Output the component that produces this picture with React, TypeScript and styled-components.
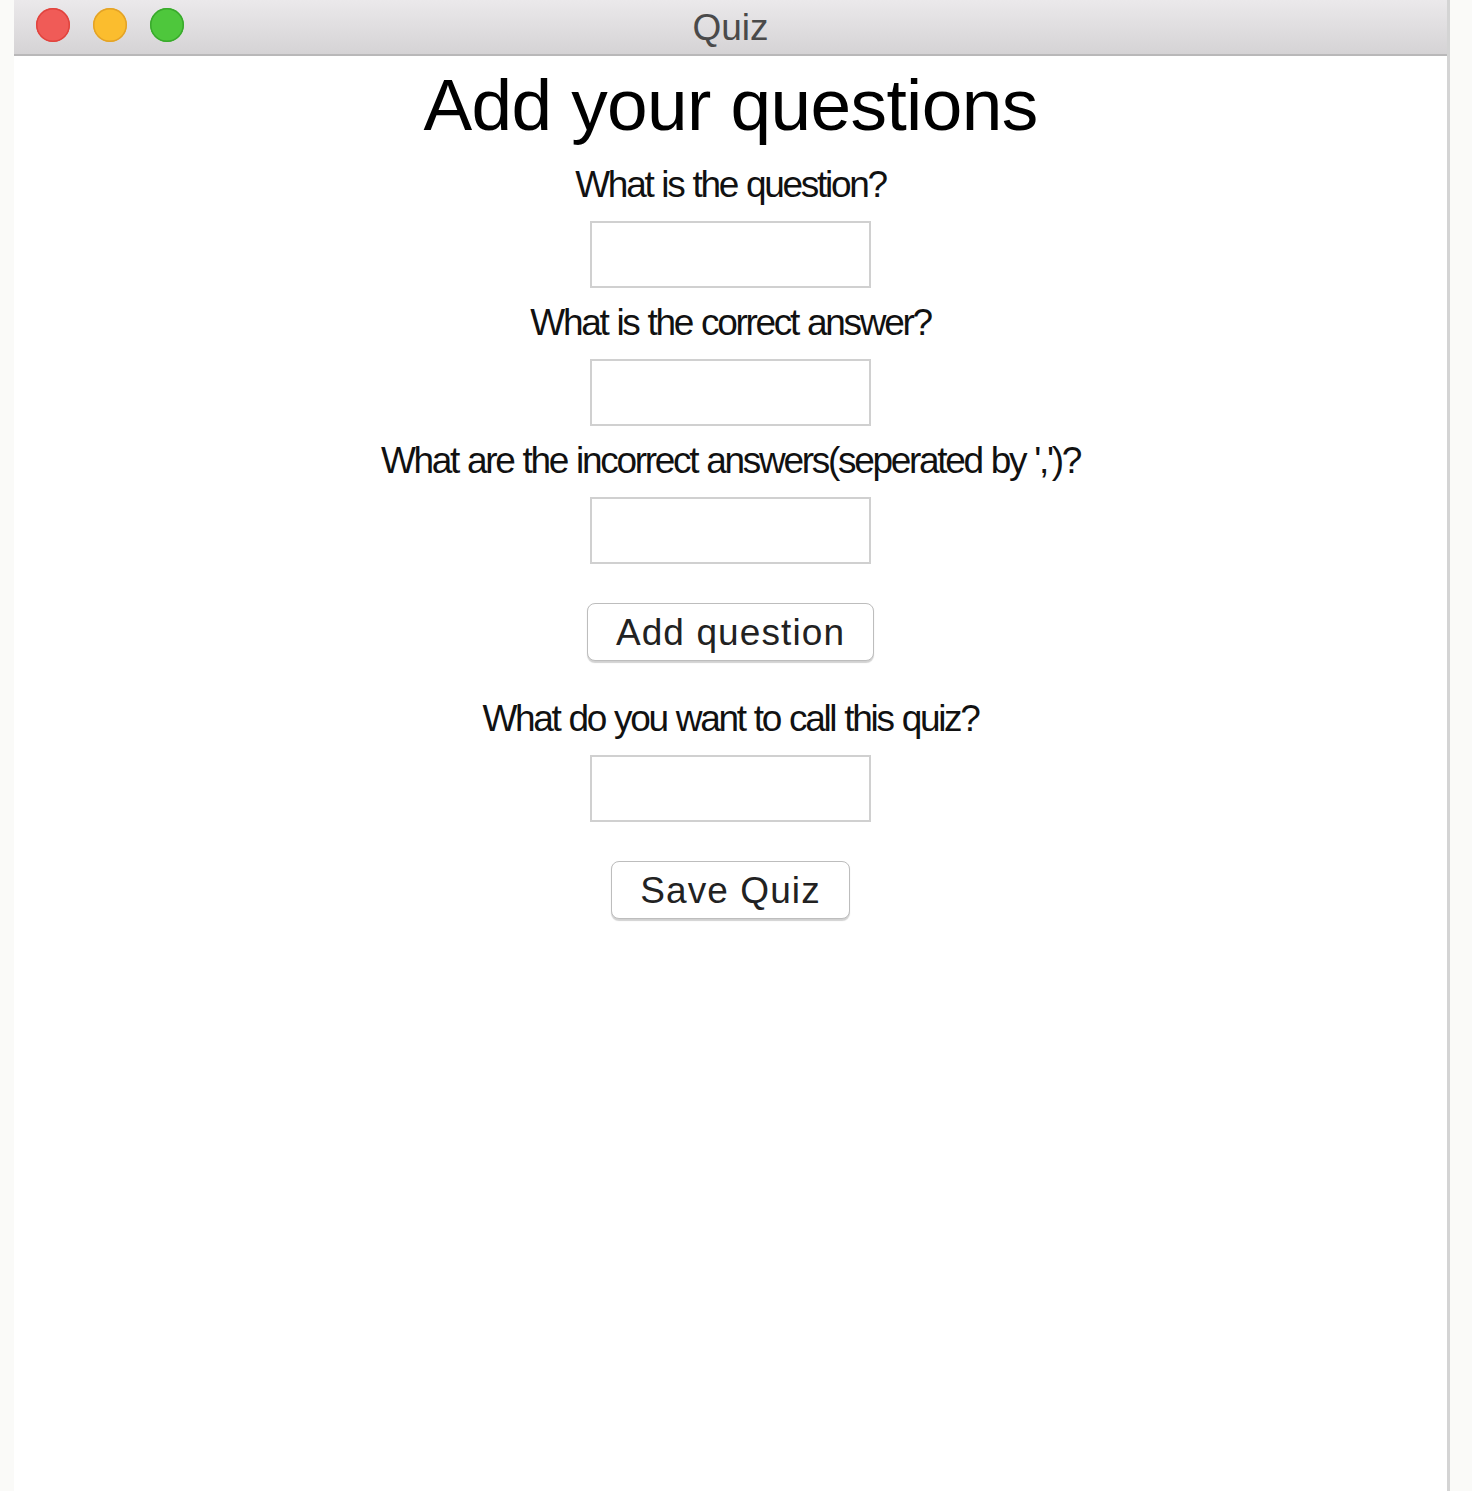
import React from "react";
import styled, { createGlobalStyle } from "styled-components";

const GlobalStyle = createGlobalStyle`
  html, body {
    margin: 0;
    padding: 0;
    background: #fafaf8;
  }
`;

const Page = styled.div`
  display: flex;
  height: 1491px;
  padding-left: 14px;
  box-sizing: border-box;
`;

const Window = styled.div`
  display: flex;
  flex-direction: column;
  width: 1433px;
  background: #ffffff;
  border-right: 3px solid #d4d4d4;
`;

const TitleBar = styled.div`
  position: relative;
  display: flex;
  align-items: center;
  justify-content: center;
  height: 54px;
  background: linear-gradient(#ebe9eb, #d5d3d5);
  border-bottom: 2px solid #b9b8b9;
  flex-shrink: 0;
`;

const Lights = styled.div`
  position: absolute;
  left: 22px;
  top: 8px;
  display: flex;
  gap: 23px;
`;

const Light = styled.span<{ $fill: string; $ring: string }>`
  width: 34px;
  height: 34px;
  border-radius: 50%;
  background: ${(p) => p.$fill};
  box-shadow: inset 0 0 0 1.5px ${(p) => p.$ring};
`;

const Title = styled.span`
  font-family: "Liberation Sans", Arial, sans-serif;
  font-size: 37px;
  color: #4a4a4a;
  line-height: 1;
  margin-top: 1px;
`;

const Content = styled.div`
  display: flex;
  flex-direction: column;
  align-items: center;
  padding-top: 13px;
  font-family: "Liberation Sans", Arial, sans-serif;
  color: #111;
`;

const Heading = styled.h1`
  margin: 0 0 24px;
  font-size: 73px;
  font-weight: 400;
  line-height: 72px;
  letter-spacing: -0.6px;
  color: #000;
`;

const Label = styled.label`
  display: block;
  font-size: 37px;
  line-height: 40px;
  letter-spacing: -2.3px;
  word-spacing: 1px;
  margin-bottom: 16px;
`;

const Input = styled.input`
  display: block;
  box-sizing: border-box;
  width: 281px;
  height: 67px;
  margin: 0 0 15px;
  border: 2px solid #d0d0d0;
  background: #fff;
  outline: none;
`;

const Button = styled.button`
  box-sizing: border-box;
  height: 58px;
  margin: 24px 0 38px;
  padding: 0 28px;
  border: 1.5px solid #bdbdbd;
  border-radius: 8px;
  background: #fff;
  box-shadow: 0 1.5px 1px rgba(0, 0, 0, 0.18);
  font-family: "Liberation Sans", Arial, sans-serif;
  font-size: 37px;
  letter-spacing: 1.1px;
  color: #222;
  line-height: 1;
`;

const Field = ({ label }: { label: string }) => (
  <>
    <Label>{label}</Label>
    <Input type="text" />
  </>
);

export default function App() {
  return (
    <>
      <GlobalStyle />
      <Page>
        <Window>
          <TitleBar>
            <Lights>
              <Light $fill="#f05b57" $ring="#e0443e" />
              <Light $fill="#fbbd2e" $ring="#e2a228" />
              <Light $fill="#4ec73c" $ring="#39a92c" />
            </Lights>
            <Title>Quiz</Title>
          </TitleBar>
          <Content>
            <Heading>Add your questions</Heading>
            <Field label="What is the question?" />
            <Field label="What is the correct answer?" />
            <Field label="What are the incorrect answers(seperated by ',')?" />
            <Button>Add question</Button>
            <Field label="What do you want to call this quiz?" />
            <Button>Save Quiz</Button>
          </Content>
        </Window>
      </Page>
    </>
  );
}
